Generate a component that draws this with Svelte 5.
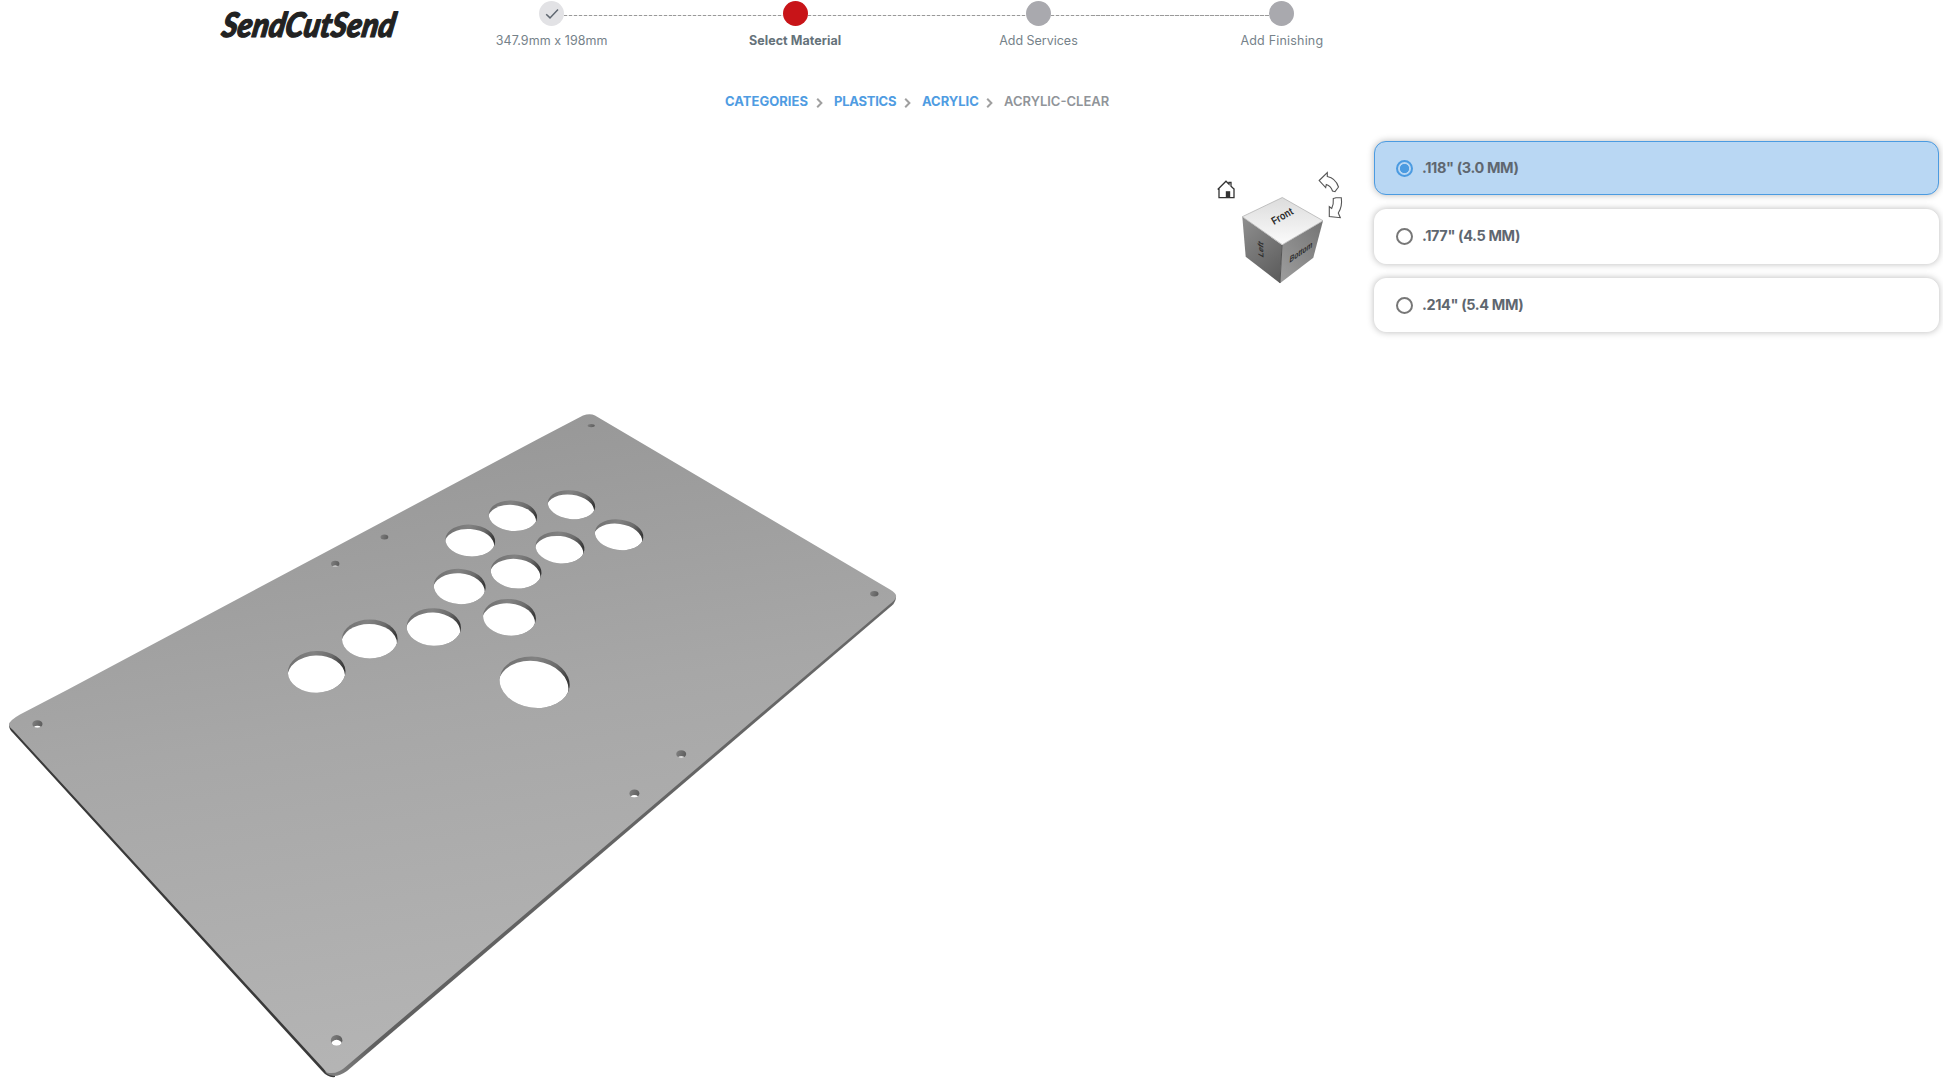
<script>
  const steps = [
    { label: '347.9mm x 198mm', state: 'done', key: 's1' },
    { label: 'Select Material', state: 'current', key: 's2' },
    { label: 'Add Services', state: 'todo', key: 's3' },
    { label: 'Add Finishing', state: 'todo', key: 's4' }
  ];

  const crumbs = ['CATEGORIES', 'PLASTICS', 'ACRYLIC'];

  const options = ['.118" (3.0 MM)', '.177" (4.5 MM)', '.214" (5.4 MM)'];
  let selected = $state(0);

  // Button cut-outs: centre, radii and tilt, in scene coordinates
  const holes = [
    [316.7, 671.9, 28.8, 20.8, -2],
    [369.8, 639, 27.8, 19.5, 0],
    [433.8, 627, 27.2, 18.8, 2],
    [509.5, 617.3, 26.5, 18.3, 5],
    [459.7, 586.5, 26, 17.6, 4],
    [516.1, 571.5, 25.4, 16.9, 5],
    [470.3, 540.5, 24.9, 15.9, 4],
    [512.9, 515.8, 24.2, 15.2, 5],
    [560, 547.5, 24.5, 15.8, 6],
    [571.5, 504.7, 23.8, 14.3, 7],
    [619.1, 534.7, 24.4, 15.2, 8],
    [534.6, 682.3, 35.2, 25.5, 8]
  ];

  // Screw holes: centre, radii, height of the see-through sliver
  const screws = [
    [591.2, 425.6, 3.6, 1.7, 0],
    [384.4, 537, 3.9, 2.5, 0],
    [335.2, 563.7, 4.2, 2.9, 1.2],
    [37.4, 724, 5.1, 3.8, 2],
    [336.6, 1040.4, 5.8, 5.4, 6],
    [874.3, 593.8, 4.2, 2.7, 0],
    [681.2, 754, 5, 3.8, 1.6],
    [634.4, 793.4, 5, 4, 2.4]
  ];
</script>

<div class="page">
  <header>
    <svg class="logo" viewBox="0 0 190 60" role="img" aria-label="SendCutSend">
      <text x="6" y="37.5" textLength="173" lengthAdjust="spacingAndGlyphs" transform="translate(6 0) skewX(-10)">SendCutSend</text>
    </svg>
    <ol class="stepper">
      {#each steps as step}
        <li class={step.state}>
          <span class="dot">
            {#if step.state === 'done'}
              <svg viewBox="0 0 25 25"><path d="M7.2 13.3l3.8 3.6 8-8.4" /></svg>
            {/if}
          </span>
          <span class="label {step.key}">{step.label}</span>
        </li>
      {/each}
    </ol>
  </header>

  <nav>
    {#each crumbs as crumb}
      <a href="#top" class={crumb.toLowerCase()}>{crumb}</a>
      <svg class="chev" viewBox="0 0 7 10"><path d="M1.200 .8l4.200 4.200-4.200 4.200" /></svg>
    {/each}
    <span class="here">ACRYLIC-CLEAR</span>
  </nav>

  <main>
    <svg class="viewer" viewBox="0 130 1364 951">
      <defs>
        <linearGradient id="plate" gradientUnits="userSpaceOnUse" x1="440" y1="415" x2="540" y2="1060">
          <stop offset="0" stop-color="#979797" />
          <stop offset="0.45" stop-color="#a7a7a7" />
          <stop offset="1" stop-color="#b5b5b5" />
        </linearGradient>
        <linearGradient id="wall" x1="0" y1="0" x2="1" y2="0.25">
          <stop offset="0" stop-color="#6c6c6c" />
          <stop offset="0.45" stop-color="#828282" />
          <stop offset="0.75" stop-color="#6c6c6c" />
          <stop offset="1" stop-color="#363636" />
        </linearGradient>
        <linearGradient id="screwWall" x1="0" y1="0" x2="1" y2="0.25">
          <stop offset="0" stop-color="#858585" />
          <stop offset="1" stop-color="#5c5c5c" />
        </linearGradient>
        <linearGradient id="rightEdge" gradientUnits="userSpaceOnUse" x1="340" y1="1075" x2="895" y2="600">
          <stop offset="0" stop-color="#7c7c7c" />
          <stop offset="0.06" stop-color="#606060" />
          <stop offset="1" stop-color="#686868" />
        </linearGradient>
        <linearGradient id="faceTop" x1="0.5" y1="0" x2="0.5" y2="1">
          <stop offset="0" stop-color="#dcdcdc" />
          <stop offset="1" stop-color="#fbfbfb" />
        </linearGradient>
        <linearGradient id="faceLeft" x1="0.2" y1="0" x2="0.7" y2="1">
          <stop offset="0" stop-color="#8c8c8c" />
          <stop offset="1" stop-color="#5e5e5e" />
        </linearGradient>
        <linearGradient id="faceRight" x1="1" y1="0" x2="0.1" y2="1">
          <stop offset="0" stop-color="#747474" />
          <stop offset="1" stop-color="#9c9c9c" />
        </linearGradient>
        {#each holes as [x, y, rx, ry, tilt], i}
          <clipPath id="hole{i}"><ellipse cx={x} cy={y} {rx} {ry} transform="rotate({tilt} {x} {y})" /></clipPath>
        {/each}
        {#each screws as [x, y, rx, ry], i}
          <clipPath id="screw{i}"><ellipse cx={x} cy={y} {rx} {ry} /></clipPath>
        {/each}
      </defs>

      <path class="edge-left" d="M9 724Q9 730 13 733L322 1071Q328 1078 335 1077L335 1060L30 718Z" />
      <path fill="url(#rightEdge)" d="M326 1073Q334 1080 347 1071L892 605.5Q896 602 896 596L880 590L320 1060Z" />
      <path fill="url(#plate)" d="M9 725Q8.500 721 20 714.500L67 690L540 438L583 415.500Q590 413 595 415.500L890 589.500Q897 593.500 896 597Q895 600.500 890 604L346 1066.500Q337 1075 327 1072.500L13 730Q9 727 9 725Z" />

      {#each holes as [x, y, rx, ry, tilt], i}
        <g clip-path="url(#hole{i})">
          <ellipse cx={x} cy={y} rx={rx + 1} ry={ry + 1} fill="url(#wall)" transform="rotate({tilt} {x} {y})" />
          <ellipse class="through" cx={x - 0.6} cy={y + 4.4} {rx} {ry} transform="rotate({tilt} {x} {y})" />
        </g>
      {/each}
      {#each screws as [x, y, rx, ry, gap], i}
        <g clip-path="url(#screw{i})">
          <ellipse cx={x} cy={y} rx={rx + 1} ry={ry + 1} fill="url(#screwWall)" />
          {#if gap}
            <ellipse class="through" cx={x} cy={y + 2 * ry - gap} {rx} {ry} />
          {/if}
        </g>
      {/each}

      <!-- View cube -->
      <path fill="url(#faceLeft)" d="M1242.300 216.700L1282 245L1280 283.300L1245.700 256.700Z" />
      <path fill="url(#faceRight)" d="M1282 245L1323 220.700L1313.300 257.700L1280 283.300Z" />
      <path class="face-top" fill="url(#faceTop)" d="M1282.300 197.500L1323 220.700L1282.300 244.700L1242.300 216.700Z" />
      <path class="seam" d="M1282 245L1280 283" />
      <text class="cube-label" transform="matrix(.87 -.5 .42 .72 1274 225)" textLength="23" lengthAdjust="spacingAndGlyphs" font-size="13">Front</text>
      <text class="cube-label" transform="matrix(-.03 -1 .75 .42 1263.500 258)" textLength="15" lengthAdjust="spacingAndGlyphs" font-size="10">Left</text>
      <text class="cube-label" transform="matrix(.84 -.58 -.1 .8 1289.300 263)" textLength="27" lengthAdjust="spacingAndGlyphs" font-size="12">Bottom</text>

      <!-- Home and rotate controls -->
      <path class="control" d="M1217.700 189.500l8.300-8.300 3 3v-1.700h2v3.700l3.500 3.300M1219 188.500v9.200h15v-9.200" />
      <path class="door" d="M1225.800 191.200h4.400v6.500h-4.400z" />
      <path class="arrow" d="M1319.200 180.500L1327.300 172.500V176.500Q1335.500 178 1338.500 187L1335 191.700L1332.500 191Q1331 186 1326.300 184.500L1325.700 187.500Z" />
      <path class="arrow" d="M1333.300 198.500L1336 197.700H1341.300Q1342.500 206.500 1338.300 213L1340.300 217.700L1329.300 216.500V206.700L1331.700 208.500Q1333.800 204.500 1333.300 198.500Z" />
    </svg>

    <div class="options">
      {#each options as option, i}
        <label class:active={selected === i}>
          <input type="radio" name="thickness" value={i} bind:group={selected} />
          <span>{option}</span>
        </label>
      {/each}
    </div>
  </main>
</div>

<style>
  :global(body) {
    background: #fff;
    overflow: hidden;
  }
  .page {
    height: 1081px;
    display: flex;
    flex-direction: column;
    font-family: Inter, 'Open Sans', sans-serif;
  }
  header {
    height: 60px;
    display: flex;
    padding-left: 215px;
  }
  .logo {
    width: 190px;
    height: 60px;
    overflow: visible;
  }
  .logo text {
    font: italic 900 34px Lato, sans-serif;
    fill: #222;
    stroke: #222;
    stroke-width: 1.2;
    stroke-linejoin: round;
  }
  .stepper {
    display: grid;
    grid-template-columns: repeat(4, 243.4px);
    width: 974px;
    margin: 0 0 0 25px;
    padding: 1px 0 0;
    list-style: none;
  }
  .stepper li {
    display: grid;
    grid-template-columns: 1fr 25px 1fr;
    grid-template-rows: 25px 30px;
  }
  .stepper li::before,
  .stepper li::after {
    content: '';
    height: 1px;
    margin-top: 14px;
    background: repeating-linear-gradient(90deg, #999 0 3.5px, #e8e8e8 3.5px 5px);
  }
  .stepper li::before {
    grid-area: 1 / 1;
  }
  .stepper li::after {
    grid-area: 1 / 3;
  }
  .stepper li:first-child::before,
  .stepper li:last-child::after {
    visibility: hidden;
  }
  .dot {
    grid-area: 1 / 2;
    border-radius: 50%;
    background: #a9a9ae;
  }
  .done .dot {
    background: #e2e2e5;
  }
  .current .dot {
    background: #c81418;
  }
  .dot svg {
    display: block;
  }
  .dot path {
    fill: none;
    stroke: #5f6770;
    stroke-width: 1.5;
  }
  .label {
    grid-area: 2 / 1 / 3 / 4;
    padding-top: 7px;
    text-align: center;
    font-size: 12.5px;
    line-height: 16px;
    color: #76828a;
    white-space: nowrap;
  }
  .s1 {
    letter-spacing: 0.07px;
  }
  .s2 {
    letter-spacing: 0.06px;
  }
  .s3 {
    margin-right: -1px;
    letter-spacing: -0.1px;
  }
  .s4 {
    letter-spacing: 0.2px;
  }
  .label.s3 {
    margin-right: 0;
    letter-spacing: -0.02px;
  }
  .current .label {
    font-weight: 700;
    color: #65727a;
  }
  nav {
    height: 20px;
    padding: 31px 0 0 725px;
    display: flex;
    line-height: 20px;
    font-size: 13px;
    font-weight: 700;
    white-space: nowrap;
  }
  nav a {
    color: #4f9ce2;
    text-decoration: none;
  }
  .categories {
    width: 84px;
    letter-spacing: 0.02px;
  }
  .plastics {
    width: 63px;
    letter-spacing: -0.25px;
  }
  .acrylic {
    width: 57px;
    letter-spacing: -0.05px;
  }
  .chev {
    width: 7px;
    height: 10px;
    margin: 7px 11px 0 7px;
  }
  .chev path {
    fill: none;
    stroke: #a0a0a0;
    stroke-width: 2;
  }
  .here {
    font-weight: 600;
    color: #909499;
  }
  main {
    display: flex;
    margin-top: 19px;
  }
  .viewer {
    width: 1364px;
    height: 951px;
    flex: none;
  }
  .edge-left {
    fill: #3a3a3a;
  }
  .through {
    fill: #fff;
  }
  .face-top {
    stroke: #aaa;
    stroke-width: 0.7;
  }
  .seam {
    stroke: #555;
    stroke-width: 1;
  }
  .cube-label {
    font-family: 'Liberation Sans', sans-serif;
    font-weight: 700;
    fill: #2c2c2c;
  }
  .control {
    fill: none;
    stroke: #333;
    stroke-width: 1.3;
  }
  .door {
    fill: #333;
  }
  .arrow {
    fill: #fff;
    stroke: #555;
    stroke-width: 1.1;
  }
  .options {
    display: flex;
    flex-direction: column;
    gap: 14px;
    padding: 11px 0 0 10px;
  }
  .options label {
    box-sizing: border-box;
    width: 565px;
    height: 55px;
    padding: 0 0 0 21px;
    display: flex;
    align-items: center;
    gap: 9px;
    border: 1px solid #fff;
    border-radius: 12px;
    background: #fff;
    box-shadow: 0 0 7px rgba(0, 0, 0, 0.28);
    font-size: 14.5px;
    font-weight: 700;
    letter-spacing: -0.38px;
    color: #5f6770;
  }
  .options label.active {
    height: 54px;
    border-color: #4b9be1;
    background: #b9d7f3;
  }
  .options label:last-child {
    height: 54px;
  }
  .options span {
    margin-top: -2px;
  }
  .options input {
    appearance: none;
    box-sizing: border-box;
    width: 17px;
    height: 17px;
    margin: 0;
    border: 2px solid #777;
    border-radius: 50%;
  }
  .options input:checked {
    border-color: #4b9be1;
    background: radial-gradient(circle, #4b9be1 4.3px, transparent 4.9px);
  }
</style>
